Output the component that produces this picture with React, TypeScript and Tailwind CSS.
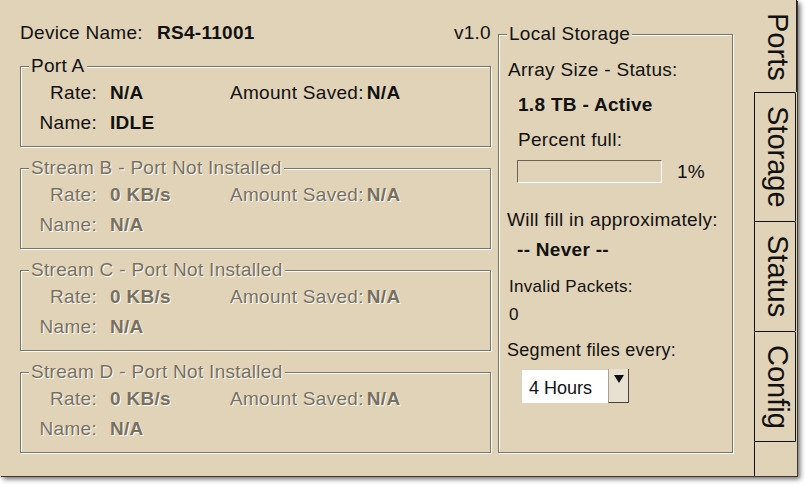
import type { ReactNode } from "react";

const ports = [
  { title: "Port A", rate: "N/A", saved: "N/A", name: "IDLE", disabled: false },
  { title: "Stream B - Port Not Installed", rate: "0 KB/s", saved: "N/A", name: "N/A", disabled: true },
  { title: "Stream C - Port Not Installed", rate: "0 KB/s", saved: "N/A", name: "N/A", disabled: true },
  { title: "Stream D - Port Not Installed", rate: "0 KB/s", saved: "N/A", name: "N/A", disabled: true },
];

const dim = "text-[#78705f] [text-shadow:1px_1px_0_#fff]";

// etched frame with the title sitting on the top line
const GroupBox = ({
  title,
  disabled,
  className,
  children,
}: {
  title: string;
  disabled?: boolean;
  className?: string;
  children: ReactNode;
}) => {
  return (
    <div className={`border border-[#7b7363] shadow-[inset_1px_1px_0_#fff,1px_1px_0_#fff] ${className ?? ""}`}>
      <div className={`-mt-[11px] ml-[8px] w-fit bg-[#e1d3b7] px-[2px] leading-[20px] ${disabled ? dim : "text-[#111]"}`}>
        {title}
      </div>
      {children}
    </div>
  );
};

const PortBox = ({ port, className }: { port: (typeof ports)[number]; className?: string }) => {
  return (
    <GroupBox title={port.title} disabled={port.disabled} className={className}>
      <div className={port.disabled ? dim : "text-[#111]"}>
        <div className="mt-[7px] flex leading-[20px]">
          <span className="w-[76px] text-right">Rate:</span>
          <span className="ml-[13px] w-[120px] font-bold">{port.rate}</span>
          <span>Amount Saved:</span>
          <span className="ml-[3px] font-bold">{port.saved}</span>
        </div>
        <div className="mt-[10px] mb-[13px] flex leading-[20px]">
          <span className="w-[76px] text-right">Name:</span>
          <span className="ml-[13px] font-bold">{port.name}</span>
        </div>
      </div>
    </GroupBox>
  );
};

const App = () => {
  return (
    <div className="h-[486px] w-[806px] bg-white font-['Liberation_Sans',Arial,sans-serif] text-[19px] tracking-[0.3px] text-[#111]">
      <div className="flex h-[476px] w-[797px] bg-[#e1d3b7] shadow-[1px_1px_0_#3d372e,3px_3px_5px_rgba(0,0,0,0.6)]">

        {/* main panel */}
        <div className="flex flex-1 gap-[7px] pl-[20px] pt-[23px]">

          {/* ports column */}
          <div className="flex w-[471px] flex-col">
            <div className="flex h-[20px] items-center justify-between leading-[20px]">
              <div className="flex">
                <span>Device Name:</span>
                <span className="ml-[14px] font-bold">RS4-11001</span>
              </div>
              <span>v1.0</span>
            </div>

            <PortBox port={ports[0]} className="mt-[23px]" />
            <PortBox port={ports[1]} className="mt-[21px]" />
            <PortBox port={ports[2]} className="mt-[21px]" />
            <PortBox port={ports[3]} className="mt-[21px]" />
          </div>

          {/* storage column */}
          <GroupBox title="Local Storage" className="mt-[11px] flex h-[419px] w-[235px] flex-col">
            <div className="mt-[16px] ml-[9px] leading-[20px]">Array Size - Status:</div>
            <div className="mt-[15px] ml-[19px] font-bold leading-[20px]">1.8 TB - Active</div>
            <div className="mt-[15px] ml-[19px] leading-[20px]">Percent full:</div>
            <div className="mt-[10px] ml-[18px] flex items-center">
              <div className="h-[23px] w-[145px] border-t border-l border-b border-r border-t-[#6b6454] border-l-[#6b6454] border-b-white border-r-white"></div>
              <span className="ml-[15px] leading-[20px]">1%</span>
            </div>
            <div className="mt-[27px] ml-[8px] leading-[20px]">Will fill in approximately:</div>
            <div className="mt-[10px] ml-[18px] font-bold leading-[20px]">-- Never --</div>
            <div className="mt-[17px] ml-[10px] text-[17px] leading-[20px]">Invalid Packets:</div>
            <div className="mt-[8px] ml-[10px] text-[17px] leading-[20px]">0</div>
            <div className="mt-[15px] ml-[8px] text-[18px] leading-[20px]">Segment files every:</div>

            <div className="mt-[9px] ml-[22px] flex h-[34px] w-[108px]">
              <div className="flex flex-1 items-center border-t border-l border-[#d8d0c0] bg-white pl-[7px] pt-[4px] text-[18px] tracking-normal">
                4 Hours
              </div>
              <div className="flex w-[21px] justify-center border-l border-r border-b border-l-[#a8a090] border-r-[#4a4438] border-b-[#4a4438] bg-[#e8e0d1] pt-[6px]">
                <svg width="10" height="8" viewBox="0 0 10 8">
                  <polygon points="0,0 10,0 5,8" fill="#111" />
                </svg>
              </div>
            </div>
          </GroupBox>
        </div>

        {/* vertical tabs */}
        <div className="flex w-[43px] flex-col text-[29px] leading-none tracking-normal">
          <div className="flex h-[92px] justify-center border-r border-[#222] pl-[4px] pt-[13px]">
            <span className="[writing-mode:vertical-rl]">Ports</span>
          </div>
          <div className="flex h-[129px] w-[42px] justify-center rounded-tr-[2px] border-t border-l border-r border-[#111] pl-[4px] pt-[13px]">
            <span className="[writing-mode:vertical-rl]">Storage</span>
          </div>
          <div className="flex h-[110px] w-[42px] justify-center rounded-tr-[2px] border-t border-l border-r border-[#111] pl-[4px] pt-[13px]">
            <span className="[writing-mode:vertical-rl]">Status</span>
          </div>
          <div className="flex h-[111px] w-[42px] justify-center rounded-tr-[2px] border border-[#111] pl-[4px] pt-[13px]">
            <span className="[writing-mode:vertical-rl]">Config</span>
          </div>
          <div className="flex-1 border-l border-[#111]"></div>
        </div>
      </div>
    </div>
  );
};

export default App;
